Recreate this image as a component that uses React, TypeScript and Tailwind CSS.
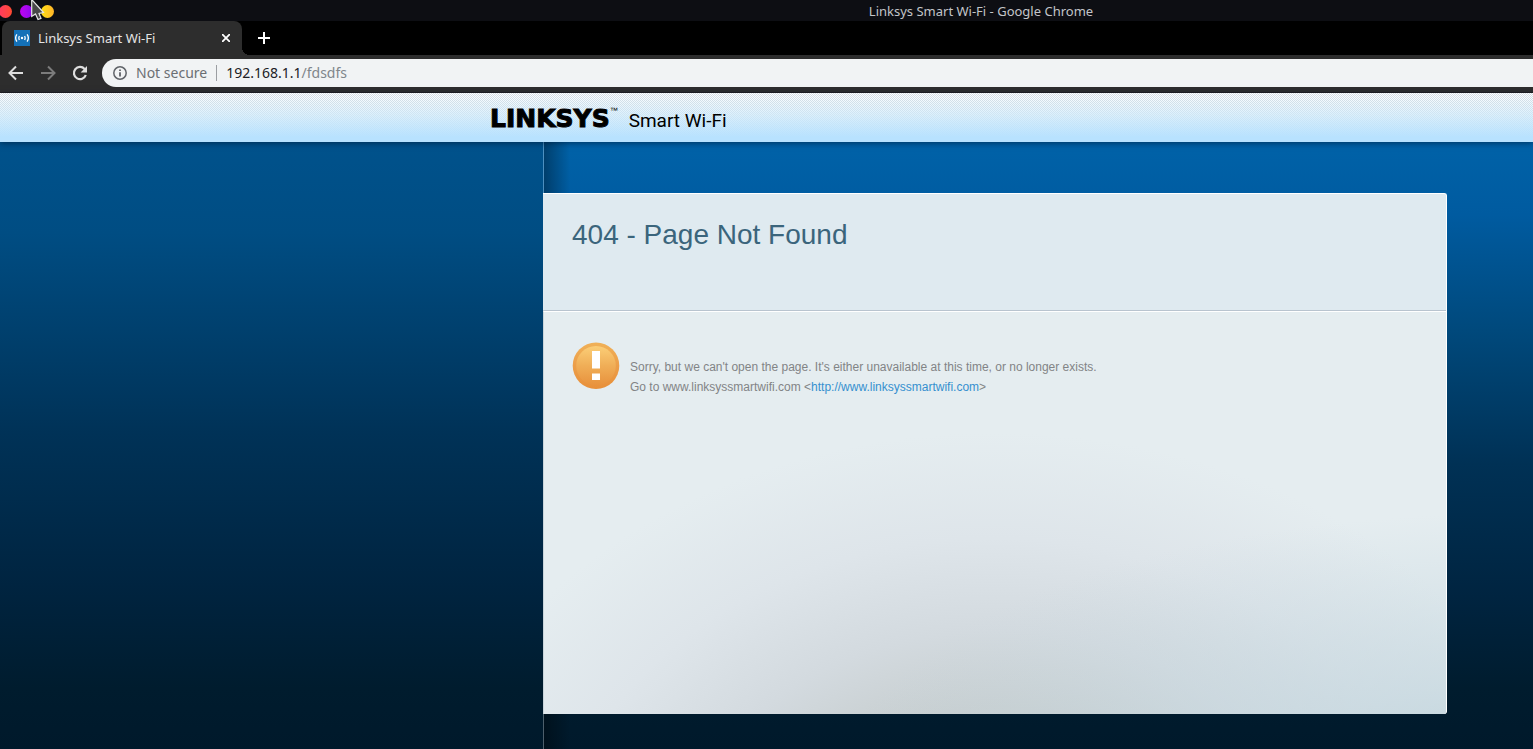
import React from "react";

function BackIcon() {
  return (
    <svg viewBox="0 0 16 16" className="size-4" fill="none" stroke="currentColor" strokeWidth="2" aria-hidden="true">
      <path d="M15 8H2M8 1.5 1.5 8 8 14.5" />
    </svg>
  );
}

function ForwardIcon() {
  return (
    <svg viewBox="0 0 16 16" className="size-4" fill="none" stroke="currentColor" strokeWidth="2" aria-hidden="true">
      <path d="M1 8h13M8 1.5 14.5 8 8 14.5" />
    </svg>
  );
}

function ReloadIcon() {
  return (
    <svg viewBox="0 0 16 16" className="size-4" aria-hidden="true">
      <path d="M13.8 10A6.1 6.1 0 1 1 12.6 4" fill="none" stroke="currentColor" strokeWidth="2.2" />
      <path d="M15 1v6.4H8.6z" fill="currentColor" />
    </svg>
  );
}

function InfoIcon() {
  return (
    <svg viewBox="0 0 14 14" className="size-3.5 shrink-0" aria-hidden="true">
      <circle cx="7" cy="7" r="6.2" fill="none" stroke="#5f6368" strokeWidth="1.5" />
      <path d="M6.1 6.2h1.8V10.6H6.1zM6.1 3.4h1.8v1.7H6.1z" fill="#5f6368" />
    </svg>
  );
}

function RouterFavicon() {
  return (
    <svg viewBox="0 0 16 16" className="size-4 shrink-0" aria-hidden="true">
      <rect width="16" height="16" fill="#1471b8" />
      <circle cx="8" cy="8" r="1.2" fill="#fff" />
      <path d="M5.4 6Q4.3 8 5.4 10M10.6 6Q11.7 8 10.6 10M2.9 4.4Q.4 8 2.9 11.6M13.1 4.4Q15.6 8 13.1 11.6" fill="none" stroke="#fff" strokeWidth="1.3" />
    </svg>
  );
}

function WarningIcon() {
  return (
    <svg viewBox="0 0 48 48" className="size-12 shrink-0" role="img" aria-label="Warning">
      <defs>
        <linearGradient id="warn-rim" x1="0" y1="0" x2="0" y2="1">
          <stop offset="0" stopColor="#f0b158" />
          <stop offset=".5" stopColor="#ec9e49" />
          <stop offset="1" stopColor="#e8903a" />
        </linearGradient>
        <linearGradient id="warn-face" x1="0" y1="0" x2="0" y2="1">
          <stop offset="0" stopColor="#fbce77" />
          <stop offset=".5" stopColor="#f0ae57" />
          <stop offset="1" stopColor="#e8923d" />
        </linearGradient>
      </defs>
      <circle cx="24" cy="23.7" r="23.3" fill="url(#warn-rim)" />
      <circle cx="24" cy="23.7" r="19.8" fill="url(#warn-face)" />
      <path d="M20 9h8v17.5h-8zM20 31.5h8v6.5h-8z" fill="#fff" />
    </svg>
  );
}

function Pointer() {
  return (
    <svg viewBox="0 0 14 21" className="absolute left-[31px] top-0 h-[21px] w-[14px]" aria-hidden="true">
      <path d="M.7-.5V16.5L4.5 14 7 19.5 10 18.3 8 13.5 12.5 12.5z" fill="#484848" stroke="#e4e4e4" strokeWidth="1.2" />
    </svg>
  );
}

function BrowserChrome() {
  return (
    <header className="relative font-['Noto_Sans',sans-serif]">
      <div className="flex h-[21px] items-center bg-[#0d0e13] pt-px">
        <div className="-ml-px flex w-[430px] shrink-0 gap-2">
          <button aria-label="Close window" className="size-[13px] rounded-full bg-linear-to-r from-[#ff3b5e] to-[#ff4a30]" />
          <button aria-label="Minimize window" className="size-[13px] rounded-full bg-linear-to-r from-[#c000f0] to-[#8b00f0]" />
          <button aria-label="Maximize window" className="size-[13px] rounded-full bg-linear-to-r from-[#ffe010] to-[#ffb428]" />
        </div>
        <p className="flex-1 text-center text-[13px] leading-5 text-[#c3c5c9]">Linksys Smart Wi-Fi - Google Chrome</p>
      </div>
      <Pointer />
      <div className="flex h-[34px] items-stretch bg-black pl-0.5">
        <div className="flex w-60 items-center rounded-t-lg bg-[#2d2d2d] px-3 text-[13px] text-[#e4e4e4]">
          <RouterFavicon />
          <span className="ml-2 flex-1 pt-px">Linksys Smart Wi-Fi</span>
          <button aria-label="Close tab" className="text-white">
            <svg viewBox="0 0 8 8" className="size-2" stroke="currentColor" strokeWidth="1.8" aria-hidden="true">
              <path d="M0 0 8 8M8 0 0 8" />
            </svg>
          </button>
        </div>
        <div className="size-2 self-end bg-[radial-gradient(circle_at_top_right,transparent_8px,#2d2d2d_8px)]" />
        <button aria-label="New tab" className="ml-2 text-white">
          <svg viewBox="0 0 12 12" className="size-3" stroke="currentColor" strokeWidth="2" aria-hidden="true">
            <path d="M6 0v12M0 6h12" />
          </svg>
        </button>
      </div>
      <div className="flex h-[38px] items-start border-b border-[#221f20] bg-[#2d2d2d] pl-2 pt-1">
        <nav aria-label="Browser" className="flex h-7 w-[94px] items-center gap-4 text-[#dedede]">
          <button aria-label="Back"><BackIcon /></button>
          <button aria-label="Forward" className="text-[#7c7c7c]"><ForwardIcon /></button>
          <button aria-label="Reload"><ReloadIcon /></button>
        </nav>
        <div className="flex h-7 flex-1 items-center rounded-l-full bg-[#f1f3f4] pl-[11px] text-sm">
          <InfoIcon />
          <span className="ml-[9px] text-[#6b6f73]">Not secure</span>
          <span className="mx-[9px] h-4 w-px bg-[#9b9ea2]" />
          <div role="textbox" aria-label="Address" className="text-[#202124]">
            192.168.1.1<span className="text-[#80868b]">/fdsdfs</span>
          </div>
        </div>
      </div>
    </header>
  );
}

function Brand() {
  return (
    <div className="relative z-10 flex h-[49px] items-baseline bg-[linear-gradient(#ffffff00,#cdeafcb3_45%,#b8e2ff_90%),repeating-conic-gradient(#d4dce2_0_25%,#ffffff_0_50%)] bg-size-[auto,2px_2px] pl-[490px] pt-2 text-black shadow-[0_1px_6px_rgba(0,20,45,0.6)]">
      <span className="font-['DejaVu_Sans',sans-serif] text-[25px] font-bold leading-9 [-webkit-text-stroke:1px_black]">LINKSYS</span>
      <span className="self-start font-['Liberation_Sans',sans-serif] text-[8px] leading-5">™</span>
      <span className="ml-[11px] font-['Roboto',sans-serif] text-[19px]">Smart Wi-Fi</span>
    </div>
  );
}

export default function App() {
  return (
    <div className="flex min-h-screen flex-col font-['Liberation_Sans',Arial,sans-serif]">
      <BrowserChrome />
      <Brand />
      <main className="flex flex-1">
        <aside className="w-[543px] shrink-0 bg-[linear-gradient(#00528c,#004d83_15%,#003257_48%,#002440_73%,#001c2e_90%,#00192b)]" />
        <div className="flex flex-1 bg-[linear-gradient(#0062a8,#005ba0_12%,#00497c_31%,#003155_53%,#002440_75%,#001c2e_90%,#00192b)]">
          <div className="flex flex-1 bg-[linear-gradient(to_right,#ffffff4d_1px,#00000059_1px,transparent_27px)] pb-[35px] pr-[86px] pt-[51px]">
            <section className="flex flex-1 flex-col overflow-hidden rounded-r-[3px] border-r border-t border-white bg-[#e5edf0]">
              <div className="h-[117px] border-b border-[#b9c4cf] bg-[#dfeaf0] px-[29px] pt-[23px]">
                <h1 className="text-[28px] leading-9 text-[#3b657c]">404 - Page Not Found</h1>
              </div>
              <div className="flex flex-1 items-start gap-2.5 border-l border-t border-l-[#c9d4da] border-t-white bg-[radial-gradient(ellipse_75%_65%_at_108%_115%,#c0d4dc_0%,#c5d7dfb3_35%,#d8e6ec00_100%),radial-gradient(ellipse_64%_110%_at_50%_140%,#c4ccce_0%,#c8cfd1_38%,#d3dadf_55%,#dee5ea_76%,#e5edf0_100%)] px-7 pt-[30px]">
                <WarningIcon />
                <p className="pt-[15px] text-xs leading-5 text-[#828486]">
                  Sorry, but we can't open the page. It's either unavailable at this time, or no longer exists.
                  <br />
                  Go to www.linksyssmartwifi.com &lt;<a href="http://www.linksyssmartwifi.com" className="text-[#3590cf]">http://www.linksyssmartwifi.com</a>&gt;
                </p>
              </div>
            </section>
          </div>
        </div>
      </main>
    </div>
  );
}
